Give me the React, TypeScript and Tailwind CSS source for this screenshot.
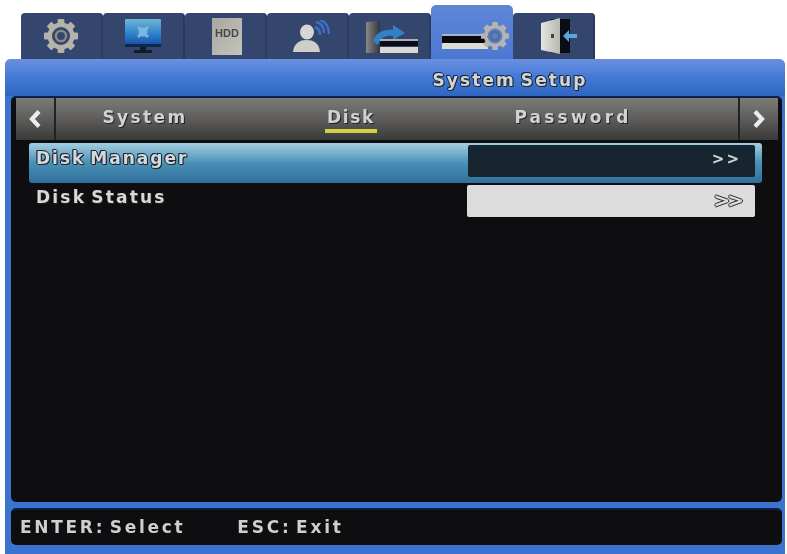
const outline = '[text-shadow:-1px_0_#1a2a3c,1px_0_#1a2a3c,0_-1px_#1a2a3c,0_1px_#1a2a3c,1px_1px_#1a2a3c,-1px_-1px_#1a2a3c]';

function GearShape({ cx, cy, r, color, ring }: { cx: number; cy: number; r: number; color: string; ring: string }) {
  const teeth = [0, 45, 90, 135, 180, 225, 270, 315];
  return (
    <g>
      {teeth.map((a) => (
        <rect key={a} x={cx - r * 0.2} y={cy - r} width={r * 0.4} height={r * 0.4} rx={r * 0.06} fill={color} transform={`rotate(${a} ${cx} ${cy})`} />
      ))}
      <circle cx={cx} cy={cy} r={r * 0.66} fill="none" stroke={color} strokeWidth={r * 0.26} />
      <circle cx={cx} cy={cy} r={r * 0.3} fill="none" stroke={ring} strokeWidth={r * 0.14} />
    </g>
  );
}

function SettingsIcon() {
  return (
    <svg width="36" height="36" viewBox="0 0 36 36">
      <GearShape cx={18} cy={18} r={17} color="#b5b2aa" ring="#8d8b88" />
    </svg>
  );
}

function MonitorIcon() {
  return (
    <svg width="38" height="36" viewBox="0 0 38 36">
      <defs>
        <linearGradient id="scr" x1="0" y1="0" x2="0" y2="1">
          <stop offset="0" stopColor="#6fb6d6" />
          <stop offset="0.6" stopColor="#2a7fcb" />
          <stop offset="1" stopColor="#1850a4" />
        </linearGradient>
      </defs>
      <rect x="1" y="1" width="36" height="26" rx="1" fill="url(#scr)" />
      <rect x="1" y="26" width="36" height="3" fill="#10264a" />
      <g fill="#79b8df">
        <circle cx="19" cy="14" r="4.5" />
        <rect x="17.5" y="7" width="3" height="14" transform="rotate(45 19 14)" />
        <rect x="12" y="12.5" width="14" height="3" transform="rotate(45 19 14)" />
      </g>
      <rect x="16" y="29" width="6" height="4" fill="#111a28" />
      <rect x="10" y="32" width="18" height="3" fill="#141c28" />
    </svg>
  );
}

function HddIcon() {
  return (
    <svg width="30" height="37" viewBox="0 0 30 37">
      <defs>
        <linearGradient id="hdd" x1="0" y1="0" x2="1" y2="1">
          <stop offset="0" stopColor="#a8a8a2" />
          <stop offset="1" stopColor="#c4c3bb" />
        </linearGradient>
      </defs>
      <rect x="0" y="0" width="30" height="37" fill="url(#hdd)" />
      <text x="15" y="19" textAnchor="middle" fontSize="11" fontWeight="700" fontFamily="Liberation Sans, sans-serif" fill="#44464c">HDD</text>
    </svg>
  );
}

function UserIcon() {
  return (
    <svg width="38" height="33" viewBox="0 0 38 33">
      <g fill="none" stroke="#3f6fc0" strokeWidth="2.5">
        <path d="M23 2 C28 3 31 7 31 13" />
        <path d="M27 0 C33 2 36 7 36 14" />
        <path d="M22 7 C25 8 27 10 27 15" />
      </g>
      <ellipse cx="14" cy="12" rx="7" ry="7.5" fill="#d5d5d2" />
      <path d="M0 32 C1 23 7 20 13 20 C21 20 26 23 27 32 Z" fill="#cfcfca" />
    </svg>
  );
}

function TransferIcon() {
  return (
    <svg width="52" height="33" viewBox="0 0 52 33">
      <defs>
        <linearGradient id="door" x1="0" y1="0" x2="1" y2="0">
          <stop offset="0" stopColor="#8a8884" />
          <stop offset="1" stopColor="#2f3542" />
        </linearGradient>
      </defs>
      <path d="M0 1 L14 0 L14 32 L0 32 Z" fill="url(#door)" />
      <path d="M7 20 C10 11 18 8 27 9 L27 4 L39 12 L27 19 L27 15 C20 14 15 16 12 24 Z" fill="#2f82c4" />
      <rect x="14" y="18" width="38" height="2" fill="#aab0bc" />
      <rect x="14" y="20" width="38" height="5" fill="#0b0d12" />
      <rect x="14" y="26" width="38" height="6" fill="#d9d9d4" />
    </svg>
  );
}

function DiskGearIcon() {
  return (
    <svg width="67" height="30" viewBox="0 0 67 30">
      <rect x="0" y="13" width="46" height="2" fill="#aab4c6" />
      <rect x="0" y="15" width="46" height="7" fill="#07090f" />
      <rect x="0" y="22" width="46" height="6" fill="#dcdcd6" />
      <GearShape cx={53} cy={15} r={14} color="#b6b4ac" ring="#5d6a80" />
    </svg>
  );
}

function ExitIcon() {
  return (
    <svg width="36" height="36" viewBox="0 0 36 36">
      <defs>
        <linearGradient id="exit" x1="0" y1="0" x2="1" y2="0">
          <stop offset="0" stopColor="#e4e4e0" />
          <stop offset="1" stopColor="#b8b8b2" />
        </linearGradient>
      </defs>
      <rect x="10" y="1" width="19" height="34" fill="#0a0d14" />
      <path d="M0 5 L19 0 L19 36 L0 32 Z" fill="url(#exit)" />
      <rect x="10" y="16" width="3" height="4" fill="#444" />
      <path d="M22 18 L28 12 L28 16 L36 16 L36 20 L28 20 L28 24 Z" fill="#5aa6dc" />
    </svg>
  );
}

const tabs = [
  { id: 'settings', icon: <SettingsIcon />, inset: '' },
  { id: 'display', icon: <MonitorIcon />, inset: 'pr-[1px]' },
  { id: 'hdd', icon: <HddIcon />, inset: 'pl-[3px]' },
  { id: 'user', icon: <UserIcon />, inset: 'pl-[9px]' },
  { id: 'network', icon: <TransferIcon />, inset: 'pl-[5px] pt-[3px]' },
  { id: 'system', icon: <DiskGearIcon />, active: true, inset: '' },
  { id: 'exit', icon: <ExitIcon />, inset: 'pl-[11px]' },
];

function Tab({ icon, active, inset }: { icon: React.ReactNode; active?: boolean; inset: string }) {
  if (active) {
    return (
      <div className="flex h-[54px] w-[82px] items-center justify-center rounded-t-[5px] bg-gradient-to-b from-[#5f86d6] to-[#4a78d2] pl-[7px] pt-[8px]">
        {icon}
      </div>
    );
  }
  return (
    <div className={`flex h-[46px] w-[82px] items-center justify-center rounded-t-[4px] border-r-2 border-[#2a3a60] bg-[#34466e] ${inset}`}>
      {icon}
    </div>
  );
}

function Chevron({ dir }: { dir: 'left' | 'right' }) {
  return (
    <svg width="14" height="20" viewBox="0 0 14 20">
      <path d={dir === 'left' ? 'M11 2.5 L4 10 L11 17.5' : 'M3 2.5 L10 10 L3 17.5'} fill="none" stroke="#ececec" strokeWidth="4.2" />
    </svg>
  );
}

export default function App() {
  return (
    <div className="flex h-[554px] w-[787px] flex-col overflow-hidden bg-white pl-[5px] pr-[2px] font-['DejaVu_Sans',sans-serif] font-bold blur-[0.5px]">
      <div className="flex h-[59px] items-end pl-[16px]">
        {tabs.map((t) => (
          <Tab key={t.id} icon={t.icon} active={t.active} inset={t.inset} />
        ))}
      </div>

      <div className="flex flex-1 flex-col rounded-t-[6px] bg-[#3b74cf]">
        <div className="flex h-[37px] items-end justify-center rounded-t-[6px] bg-gradient-to-b from-[#6b90e0] via-[#4279d6] to-[#2f66c0] pb-[6px] pl-[230px]">
          <span className={`text-[17px] leading-[20px] tracking-[2.1px] text-[#d4d4d4] [word-spacing:-3px] ${outline}`}>System Setup</span>
        </div>

        <div className="mx-[6px] mr-[3px] flex h-[406px] flex-col rounded-[5px] border-t-2 border-[#0c2048] bg-[#0e0e10] pl-[5px] pr-[4px]">
          <div className="flex h-[42px] bg-gradient-to-b from-[#7b7b78] via-[#5e5d5b] to-[#3a3a3a]">
            <div className="flex w-[40px] items-center justify-center border-r-2 border-[#222]">
              <Chevron dir="left" />
            </div>
            <div className="relative flex flex-1 items-center pb-[2px] text-[17px] text-[#d2d2d2] [text-shadow:1px_1px_#222]">
              <span className="w-[178px] text-center tracking-[2.4px]">System</span>
              <span className="w-[234px] text-center tracking-[1.6px]">Disk</span>
              <span className="w-[210px] text-center tracking-[3.2px]">Password</span>
              <div className="absolute left-[269px] top-[31px] h-[4px] w-[52px] bg-[#cfd23c]" />
            </div>
            <div className="flex w-[40px] items-center justify-center border-l-2 border-[#222]">
              <Chevron dir="right" />
            </div>
          </div>

          <div className="ml-[13px] mr-[16px] mt-[3px] flex h-[40px] items-center justify-between rounded-[3px] bg-gradient-to-b from-[#a4cfe2] via-[#4a90b6] to-[#2f6f9a] pl-[7px] pr-[7px]">
            <span className={`mt-[-8px] text-[17px] tracking-[2px] text-[#d8d8d8] [word-spacing:-3px] ${outline}`}>Disk Manager</span>
            <div className="mt-[-4px] flex h-[32px] w-[287px] items-center justify-end rounded-[2px] bg-[#16252f] pb-[4px] pr-[14px] text-[15px] tracking-[2px] text-[#cfd6d8]">
              &gt;&gt;
            </div>
          </div>

          <div className="ml-[13px] mr-[16px] mt-[2px] flex h-[32px] items-center justify-between pl-[7px] pr-[7px]">
            <span className="mt-[-6px] text-[17px] tracking-[2.2px] text-[#d8d8d8] [word-spacing:-3px] [text-shadow:1px_1px_#222]">Disk Status</span>
            <div className="flex h-[32px] w-[288px] items-center justify-end rounded-[2px] bg-[#dcdcdc] pb-[2px] pr-[14px] text-[20px] tracking-[-3px] text-[#dcdcdc] [text-shadow:-1px_0_#2a2a2a,1px_0_#2a2a2a,0_-1px_#2a2a2a,0_1px_#2a2a2a]">
              &gt;&gt;
            </div>
          </div>
        </div>

        <div className="mx-[6px] mr-[3px] mt-[6px] flex h-[37px] items-center rounded-[5px] border-t-2 border-[#0c2048] bg-[#0e0e10] pl-[9px] text-[17px] text-[#cfcfcf] [word-spacing:-4px]">
          <span className="tracking-[2.7px]">ENTER: Select</span>
          <span className="ml-[52px] tracking-[2.75px]">ESC: Exit</span>
        </div>
      </div>
    </div>
  );
}
